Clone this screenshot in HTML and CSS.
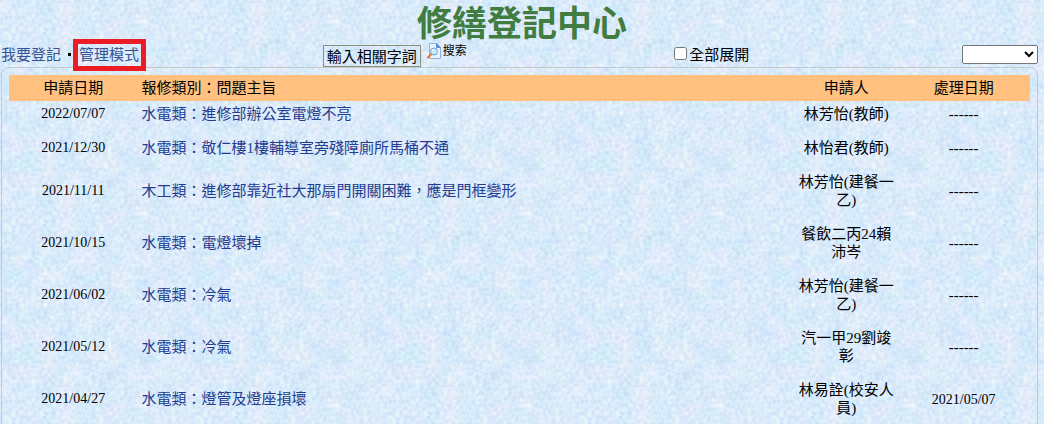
FILE: index.html
```html
<!DOCTYPE html>
<html lang="zh-Hant">
<head>
    <meta charset="UTF-8">
    <meta name="viewport" content="width=device-width, initial-scale=1.0">
    <title>修繕登記中心</title>
    <link rel="stylesheet" href="styles.css">
</head>
<body>
    <h1 class="title">修繕登記中心</h1>

    <!-- Toolbar -->
    <form class="toolbar">
        <nav class="menu">
            <a href="#add">我要登記</a>
            <span class="dot"></span>
            <a href="#admin" class="marked">管理模式</a>
        </nav>
        <div class="search">
            <input type="text" class="keyword" value="輸入相關字詞" aria-label="輸入相關字詞">
            <button type="submit" class="searchBtn">
                <svg width="14" height="16" viewBox="0 0 14 16" aria-hidden="true">
                    <path d="M2.5.5h7l4 4v11h-11z" fill="#eaf4ff" stroke="#8fb2e6"/>
                    <path d="M9.5.5v4h4z" fill="#5b8fdc" stroke="#5b8fdc"/>
                    <path d="M4 11.500L1 14.500" stroke="#e07a35" stroke-width="2" stroke-linecap="round"/>
                    <circle cx="7" cy="8.500" r="3.500" fill="#c4ecfb" stroke="#6f9cd0"/>
                    <path d="M5 8.500a2 2 0 0 1 2-2" fill="none" stroke="#fff"/>
                </svg>
                搜索
            </button>
        </div>
        <label class="expand"><input type="checkbox">全部展開</label>
        <select class="pages" aria-label="頁次">
            <option></option>
        </select>
    </form>

    <!-- Repair list -->
    <div class="frame">
        <table class="list">
            <thead>
                <tr>
                    <th class="date">申請日期</th>
                    <th class="subject">報修類別：問題主旨</th>
                    <th class="person">申請人</th>
                    <th class="done">處理日期</th>
                </tr>
            </thead>
            <tbody>
                <tr>
                    <td class="date">2022/07/07</td>
                    <td class="subject"><a href="#r1">水電類：進修部辦公室電燈不亮</a></td>
                    <td class="person">林芳怡(教師)</td>
                    <td class="done">------</td>
                </tr>
                <tr>
                    <td class="date">2021/12/30</td>
                    <td class="subject"><a href="#r2">水電類：敬仁樓1樓輔導室旁殘障廁所馬桶不通</a></td>
                    <td class="person">林怡君(教師)</td>
                    <td class="done">------</td>
                </tr>
                <tr>
                    <td class="date">2021/11/11</td>
                    <td class="subject"><a href="#r3">木工類：進修部靠近社大那扇門開關困難，應是門框變形</a></td>
                    <td class="person">林芳怡(建餐一乙)</td>
                    <td class="done">------</td>
                </tr>
                <tr>
                    <td class="date">2021/10/15</td>
                    <td class="subject"><a href="#r4">水電類：電燈壞掉</a></td>
                    <td class="person">餐飲二丙24賴沛岑</td>
                    <td class="done">------</td>
                </tr>
                <tr>
                    <td class="date">2021/06/02</td>
                    <td class="subject"><a href="#r5">水電類：冷氣</a></td>
                    <td class="person">林芳怡(建餐一乙)</td>
                    <td class="done">------</td>
                </tr>
                <tr>
                    <td class="date">2021/05/12</td>
                    <td class="subject"><a href="#r6">水電類：冷氣</a></td>
                    <td class="person">汽一甲29劉竣彰</td>
                    <td class="done">------</td>
                </tr>
                <tr>
                    <td class="date">2021/04/27</td>
                    <td class="subject"><a href="#r7">水電類：燈管及燈座損壞</a></td>
                    <td class="person">林易詮(校安人員)</td>
                    <td class="done"><span class="day">2021/05/07</span></td>
                </tr>
            </tbody>
        </table>
    </div>
</body>
</html>
```

FILE: styles.css
```css
body {
    margin: 0;
    font-family: "Liberation Serif", "Noto Sans CJK TC", serif;
    font-size: 15px;
    line-height: 18px;
    color: #000;
    background-color: #d8e7fa;
    /* mottled paper tile */
    background-image: url("data:image/svg+xml,%3Csvg xmlns='http://www.w3.org/2000/svg' width='192' height='192'%3E%3Cfilter id='p' x='0' y='0' width='100%25' height='100%25' color-interpolation-filters='sRGB'%3E%3CfeTurbulence type='fractalNoise' baseFrequency='.05' numOctaves='2' seed='4' stitchTiles='stitch'/%3E%3CfeColorMatrix values='.14 0 0 0 .695 .03 .04 0 0 .82 0 0 .03 0 .945 0 0 0 0 1' result='a'/%3E%3CfeTurbulence type='fractalNoise' baseFrequency='.25' numOctaves='2' seed='9' stitchTiles='stitch'/%3E%3CfeColorMatrix values='.18 0 0 0 0 .13 0 0 0 0 .04 0 0 0 0 0 0 0 0 1' result='b'/%3E%3CfeComposite in='a' in2='b' operator='arithmetic' k2='1' k3='1'/%3E%3C/filter%3E%3Crect width='192' height='192' filter='url(%23p)'/%3E%3C/svg%3E");
}
a {
    color: #243c90;
    text-decoration: none;
}
a:hover {
    text-decoration: underline;
}
input, select, button {
    font-family: inherit;
    color: #000;
}
.title {
    margin: 0;
    padding-top: 8px;
    font-size: 35px;
    line-height: 34px;
    font-weight: bold;
    text-align: center;
    color: #417d40;
}

/* Toolbar */
.toolbar {
    display: grid;
    grid-template-columns: 31% 33% 1fr auto;
    align-items: center;
    height: 25px;
    padding-right: 6px;
}
.menu {
    display: flex;
    align-items: center;
    padding-left: 1px;
}
.menu a {
    color: #365396;
}
.dot {
    width: 3px;
    height: 3px;
    margin: 0 2px 0 7px;
    background-color: #000;
}
.menu .marked {
    position: relative;
    padding: 2px 2px 2px 1px;
    margin: -7px 0;
    border: 5px solid #ed1c24;
}
.search {
    display: flex;
    align-items: flex-start;
    gap: 6px;
    padding-left: 1px;
}
.keyword {
    box-sizing: border-box;
    width: 98px;
    height: 22px;
    margin-top: 3px;
    padding: 0 3px 2px;
    border: 1px solid #8c8f7c;
    background-color: transparent;
    font-size: 15px;
}
.searchBtn {
    display: flex;
    align-items: center;
    gap: 2px;
    padding: 0;
    border: none;
    background: none;
    font-size: 12px;
    line-height: 18px;
    cursor: pointer;
}
.expand {
    display: flex;
    align-items: center;
    padding-left: 5px;
}
.expand input {
    margin: 0 2px 2px 5px;
}
.pages {
    width: 76px;
    height: 19px;
}

/* Repair list */
.frame {
    margin: 0 6px 0 1px;
    padding: 7px;
    border: 1px solid #c6c9cc;
    border-radius: 8px;
}
.list {
    width: 100%;
    table-layout: fixed;
    border-collapse: collapse;
}
.list th {
    padding: 4px 0;
    background-color: #ffc080;
    font-weight: normal;
}
.list td {
    padding: 4px 0 12px;
    text-align: center;
}
.list .date {
    width: 12%;
    padding-left: 3px;
    padding-right: 7px;
}
td.date, .day {
    font-size: 14px;
}
.list .subject {
    text-align: left;
}
.list .person {
    width: 10%;
}
.list .done {
    width: 13%;
}
```
